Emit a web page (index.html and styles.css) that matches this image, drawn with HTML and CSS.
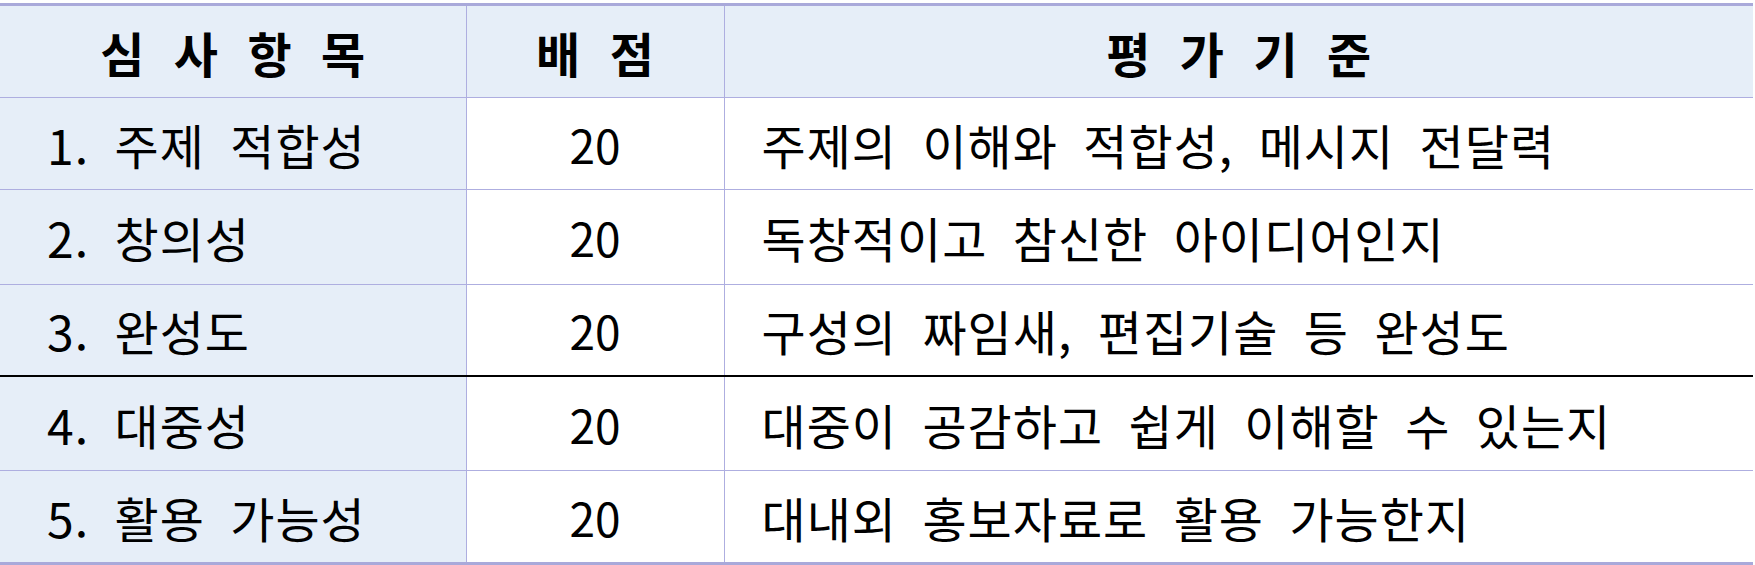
FILE: index.html
```html
<!DOCTYPE html>
<html lang="ko">
<head>
<meta charset="utf-8">
<link rel="stylesheet" href="styles.css">
</head>
<body>
<table class="eval">
  <colgroup>
    <col class="c1"><col class="c2"><col class="c3">
  </colgroup>
  <thead>
    <tr class="head">
      <th>심 사 항 목</th>
      <th>배 점</th>
      <th>평 가 기 준</th>
    </tr>
  </thead>
  <tbody>
    <tr class="r1">
      <td class="item">1. 주제 적합성</td>
      <td class="score">20</td>
      <td class="crit">주제의 이해와 적합성, 메시지 전달력</td>
    </tr>
    <tr class="r2">
      <td class="item">2. 창의성</td>
      <td class="score">20</td>
      <td class="crit">독창적이고 참신한 아이디어인지</td>
    </tr>
    <tr class="r3">
      <td class="item">3. 완성도</td>
      <td class="score">20</td>
      <td class="crit">구성의 짜임새, 편집기술 등 완성도</td>
    </tr>
    <tr class="r4">
      <td class="item">4. 대중성</td>
      <td class="score">20</td>
      <td class="crit">대중이 공감하고 쉽게 이해할 수 있는지</td>
    </tr>
    <tr class="r5">
      <td class="item">5. 활용 가능성</td>
      <td class="score">20</td>
      <td class="crit">대내외 홍보자료로 활용 가능한지</td>
    </tr>
  </tbody>
</table>
</body>
</html>
```

FILE: styles.css
```css
html, body {
  margin: 0;
  padding: 0;
  background: #ffffff;
}
body {
  padding-top: 3px;
  font-family: "Noto Sans CJK KR", "Noto Sans", sans-serif;
  color: #000;
}
.eval {
  border-collapse: collapse;
  width: 1753px;
  table-layout: fixed;
  border-top: 3px solid #a9a9da;
  border-bottom: 3px solid #a9a9da;
}
.c1 { width: 466px; }
.c2 { width: 258px; }
.c3 { width: 1029px; }
.eval th, .eval td {
  padding: 0;
  border-left: 1px solid #aeaee0;
  border-bottom: 1px solid #aeaee0;
  vertical-align: middle;
  white-space: nowrap;
}
.eval th:first-child, .eval td:first-child { border-left: none; }
.eval th {
  background: #e6eef8;
  font-weight: 700;
  font-size: 48px;
  word-spacing: 16px;
  text-align: center;
  height: 91px;
  line-height: 1;
}
.eval td {
  font-size: 48px;
  font-weight: 400;
  line-height: 1;
  letter-spacing: 1px;
  word-spacing: 11px;
}
.item {
  background: #e6eef8;
  padding-left: 47px !important;
}
.score {
  text-align: center;
  font-size: 46px !important;
  letter-spacing: 0 !important;
}
.crit { padding-left: 37px !important; }
.r1 td { height: 91px; }
.r2 td { height: 94px; }
.r3 td { height: 90px; }
.r3 td { border-bottom: 2px solid #000; }
.r4 td { height: 93px; }
.r5 td { height: 91px; border-bottom: none; }
```
